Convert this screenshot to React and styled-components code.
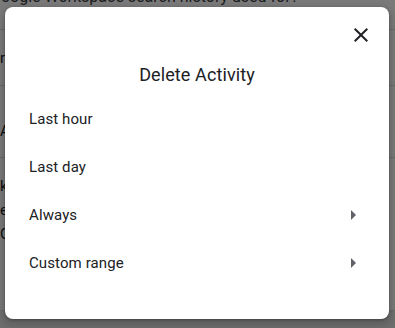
import React from "react";
import styled, { createGlobalStyle } from "styled-components";

const Global = createGlobalStyle`
  html, body { margin: 0; padding: 0; background: #fff; }
  body { font-family: Roboto, "Noto Sans", Arial, sans-serif; }
`;

const Page = styled.div`
  position: relative;
  width: 395px;
  height: 328px;
  overflow: hidden;
  background: #fff;
`;

const Backdrop = styled.div`
  display: flex;
  flex-direction: column;
  height: 100%;
`;

const Question = styled.div`
  font-size: 16px;
  line-height: 20px;
  color: #3c4043;
  margin-top: -13px;
  margin-left: -10px;
  white-space: nowrap;
  height: 42px;
  border-bottom: 1px solid #dadce0;
`;

const Section = styled.div`
  height: ${(p) => p.$h}px;
  box-sizing: border-box;
  padding-top: ${(p) => p.$top}px;
  border-bottom: 1px solid #dadce0;
  display: flex;
  flex-direction: column;
  font-size: 15px;
  line-height: 24px;
  color: #202124;
  white-space: nowrap;
`;

const Footer = styled.div`
  flex: 1;
  background: #e8e8e8;
`;

const Overlay = styled.div`
  position: absolute;
  inset: 0;
  background: rgba(0, 0, 0, 0.52);
`;

const Dialog = styled.div`
  position: absolute;
  left: 5px;
  top: 7px;
  width: 384px;
  height: 312px;
  box-sizing: border-box;
  background: #fff;
  border-radius: 8px;
  box-shadow: 0 4px 8px 3px rgba(0, 0, 0, 0.15), 0 1px 3px rgba(0, 0, 0, 0.3);
  display: flex;
  flex-direction: column;
  padding: 16px 0 32px;
`;

const Header = styled.div`
  display: flex;
  justify-content: flex-end;
  padding: 0 16px;
`;

const CloseButton = styled.button`
  width: 24px;
  height: 24px;
  padding: 0;
  border: 0;
  background: none;
  color: #202124;
  display: flex;
  align-items: center;
  justify-content: center;
  cursor: pointer;
`;

const Title = styled.h2`
  margin: 16px 0 8px;
  font-size: 18px;
  line-height: 24px;
  font-weight: 400;
  color: #202124;
  text-align: center;
  letter-spacing: 0.1px;
`;

const Menu = styled.ul`
  list-style: none;
  margin: 0;
  padding: 0;
`;

const Item = styled.li`
  height: 48px;
  display: flex;
  align-items: center;
  justify-content: space-between;
  padding: 0 24px;
  font-size: 15px;
  color: #202124;
  letter-spacing: 0.1px;
`;

const Arrow = styled.svg`
  width: 24px;
  height: 24px;
  fill: #5f6368;
`;

const items = [
  { label: "Last hour" },
  { label: "Last day" },
  { label: "Always", sub: true },
  { label: "Custom range", sub: true },
];

export default function App() {
  return (
    <>
      <Global />
      <Page>
        <Backdrop aria-hidden="true">
          <Question>Google Workspace search history used for?</Question>
          <Section $h={56} $top={16}>now saved in your account</Section>
          <Section $h={72} $top={33}>Activity controls</Section>
          <Section $h={153} $top={16}>
            <span>keep your search history</span>
            <span>edit or delete activity</span>
            <span>Google Account settings</span>
          </Section>
          <Footer />
        </Backdrop>
        <Overlay />
        <Dialog role="dialog" aria-label="Delete Activity">
          <Header>
            <CloseButton aria-label="Close">
              <svg width="24" height="24" viewBox="0 0 24 24" fill="#202124">
                <path d="M19 6.41 17.59 5 12 10.59 6.41 5 5 6.41 10.59 12 5 17.59 6.41 19 12 13.41 17.59 19 19 17.59 13.41 12z" />
              </svg>
            </CloseButton>
          </Header>
          <Title>Delete Activity</Title>
          <Menu>
            {items.map((it) => (
              <Item key={it.label}>
                <span>{it.label}</span>
                {it.sub && (
                  <Arrow viewBox="0 0 24 24">
                    <path d="M10 17l5-5-5-5v10z" />
                  </Arrow>
                )}
              </Item>
            ))}
          </Menu>
        </Dialog>
      </Page>
    </>
  );
}
